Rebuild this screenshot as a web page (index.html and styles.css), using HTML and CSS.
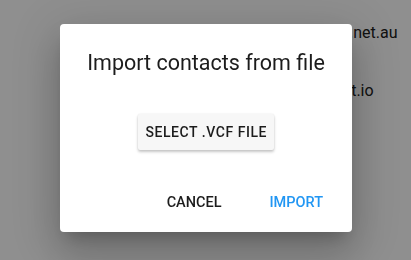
FILE: index.html
```html
<!DOCTYPE html>
<html>
<head>
<meta charset="utf-8">
<link rel="stylesheet" href="styles.css">
</head>
<body>
<div class="page">
  <ul class="contacts">
    <li class="contact">mark.allen@iinet.net.au</li>
    <li class="contact">contact@crowbot.io</li>
  </ul>
</div>
<div class="overlay"></div>
<div class="dialog">
  <h1 class="dialog-title">Import contacts from file</h1>
  <div class="dialog-body">
    <button class="raised-btn">SELECT .VCF FILE</button>
  </div>
  <div class="dialog-actions">
    <button class="flat-btn">CANCEL</button>
    <button class="flat-btn primary">IMPORT</button>
  </div>
</div>
</body>
</html>
```
FILE: styles.css
```css
html, body {
  margin: 0;
  padding: 0;
  width: 411px;
  height: 260px;
  overflow: hidden;
  background: #ffffff;
  font-family: Roboto, "Liberation Sans", sans-serif;
}
.page {
  height: 260px;
}
.contacts {
  list-style: none;
  margin: 0;
  padding: 4px 0 0 230px;
}
.contact {
  font-size: 16px;
  line-height: 58px;
  height: 58px;
  color: #202020;
  white-space: nowrap;
}
.overlay {
  position: fixed;
  inset: 0;
  background: rgba(0, 0, 0, 0.44);
}
.dialog {
  position: absolute;
  left: 60px;
  top: 24px;
  width: 292px;
  height: 208px;
  box-sizing: border-box;
  background: #ffffff;
  border-radius: 4px;
  box-shadow: 0 11px 15px -7px rgba(0,0,0,0.2), 0 24px 38px 3px rgba(0,0,0,0.14), 0 9px 46px 8px rgba(0,0,0,0.12);
  display: flex;
  flex-direction: column;
  padding-top: 26px;
}
.dialog-title {
  margin: 0;
  font-size: 21.5px;
  font-weight: 400;
  line-height: 26px;
  text-align: center;
  color: #1c1c1c;
}
.dialog-body {
  display: flex;
  justify-content: center;
  padding-top: 38px;
}
.raised-btn {
  height: 36px;
  padding: 0 7px 0 7.5px;
  border: none;
  border-radius: 2px;
  background: #f7f7f7;
  box-shadow: 0 2px 3px rgba(0,0,0,0.22), 0 0 2px rgba(0,0,0,0.08);
  font-family: Roboto, "Liberation Sans", sans-serif;
  font-size: 14px;
  font-weight: 500;
  letter-spacing: 0.55px;
  color: #1c1c1c;
}
.dialog-actions {
  display: flex;
  justify-content: flex-end;
  gap: 16px;
  padding: 34px 13px 0 0;
}
.flat-btn {
  height: 36px;
  padding: 0 16px;
  border: none;
  background: transparent;
  font-family: Roboto, "Liberation Sans", sans-serif;
  font-size: 14.5px;
  font-weight: 500;
  color: #1c1c1c;
}
.flat-btn.primary {
  color: #2196f3;
}
```
